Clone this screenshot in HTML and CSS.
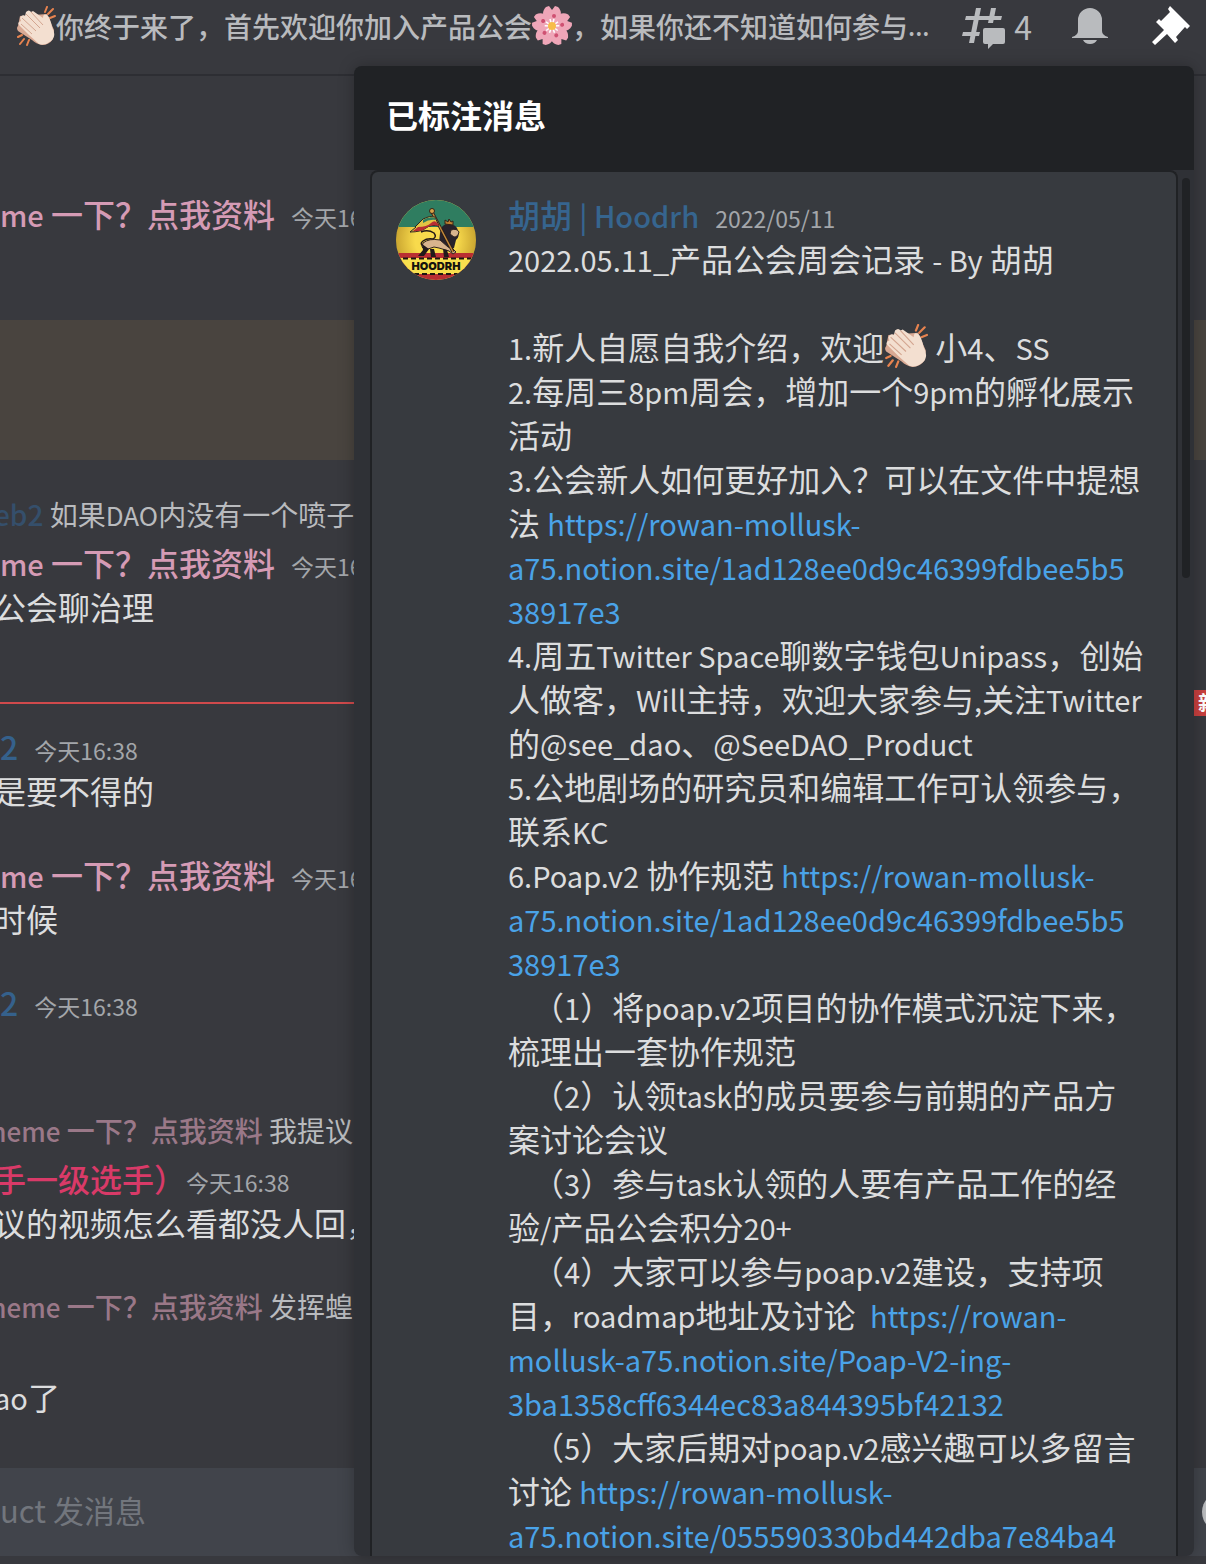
FILE: index.html
```html
<!DOCTYPE html>
<html lang="zh-CN">
<head>
<meta charset="utf-8">
<meta name="viewport" content="width=device-width, initial-scale=1">
<title>已标注消息</title>
<link rel="stylesheet" href="styles.css">
</head>
<body>
<svg class="defs" aria-hidden="true">
  <symbol id="clap" viewBox="0 0 38 40">
    <path d="M28 6l2-5M31 8l5-5M33 12l5-2M5 29l-4 2M7 33l-4 5M12 34l-2 5" stroke="#e8834f" stroke-width="2" fill="none" stroke-linecap="round"/>
    <path d="M1 20L3 10 30 8 37 24 36 33Q32 39 25 39 19 38 15 34L1 25q-2-3 0-5z" fill="#d9a994"/>
    <path d="M3 12q2-4 5-2l1-4q3-3 5 0l2-1 10 7q0-5 4-3 3 2 5 12 5 9-1 14-6 5-12 3L12 29 2 19q-2-3 2-4z" fill="#f3dfd0"/>
    <path d="M5 12l14 13M9 8l14 14M14 6l12 13M4 18l11 10" stroke="#d3a590" stroke-width="1" fill="none"/>
  </symbol>
</svg>

<div class="app">
  <header class="topbar">
    <div class="topic"><svg class="emoji" role="img" aria-label="鼓掌"><use href="#clap"/></svg>你终于来了，首先欢迎你加入产品公会<svg class="emoji" viewBox="-20 -20 40 40" role="img" aria-label="樱花"><g fill="#efa6b8"><path id="p" d="M0 0C-6-4-13-12-6-19L-3-20 0-16 3-20 6-19C13-12 6-4 0 0z"/><use href="#p" transform="rotate(72)"/><use href="#p" transform="rotate(144)"/><use href="#p" transform="rotate(216)"/><use href="#p" transform="rotate(288)"/></g><g stroke="#fff" stroke-width="1.500"><path id="s" d="M0 0L2-7M0 0L-2-7"/><use href="#s" transform="rotate(72)"/><use href="#s" transform="rotate(144)"/><use href="#s" transform="rotate(216)"/><use href="#s" transform="rotate(288)"/></g><g fill="#cf5172"><circle id="d" cx="2" cy="-10" r="2"/><use href="#d" transform="rotate(72)"/><use href="#d" transform="rotate(144)"/><use href="#d" transform="rotate(216)"/><use href="#d" transform="rotate(288)"/></g><circle r="4" fill="#f7bd4b"/></svg>，如果你还不知道如何参与<span class="en">...</span></div>
    <nav class="tools" aria-label="频道工具">
      <button class="tool threads" aria-label="子区"><svg width="44" height="44" viewBox="0 0 44 44"><path d="M14 4h5l-7 35H7zM29 4h5l-3 15h-5zM4 12h36l-1 4H3zM1 28h17l-1 4H0z"/><path d="M23 24h18q2 0 2 2v12q0 2-2 2H31l-5 5v-5h-3q-2 0-2-2V26q0-2 2-2z"/></svg>4</button>
      <button class="tool" aria-label="通知设置"><svg width="36" height="44" viewBox="0 0 36 44"><path d="M6 16a12 12 0 0 1 24 0v11q0 4 6 6v1H0v-1q6-2 6-6zM11 36h14q-2 4-7 4t-7-4z"/></svg></button>
      <button class="tool active" aria-label="已标注消息"><svg width="38" height="44" viewBox="0 0 38 44"><path d="M18 2l20 20-3 3-2-2-9 10 2 3-3 3-8-9L3 41l-3-3 12-12-8-8 3-3 2 2 9-9-2-3z"/></svg></button>
    </nav>
  </header>

  <main class="chat">
    <div class="msg first"><p><b class="pink"><span class="en">me</span> 一下？点我资料</b><time>今天16:38</time></p></div>
    <div class="mention"></div>
    <div class="msg reply-msg">
      <p class="reply cut"><b class="blue">eb2</b> 如果<span class="en">DAO</span>内没有一个喷子</p>
      <p><b class="pink"><span class="en">me</span> 一下？点我资料</b><time>今天16:38</time></p>
      <p class="cut">公会聊治理</p>
    </div>
    <div class="divider"><span class="new">新</span></div>
    <div class="msg after"><p><b class="blue">2</b><time>今天16:38</time></p><p class="cut">是要不得的</p></div>
    <div class="msg"><p><b class="pink"><span class="en">me</span> 一下？点我资料</b><time>今天16:38</time></p><p class="cut">时候</p></div>
    <div class="msg"><p><b class="blue">2</b><time>今天16:38</time></p></div>
    <div class="msg far">
      <p class="reply cut-wide"><b class="pink"><span class="en">meme</span> 一下？点我资料</b> 我提议</p>
      <p class="cut tight"><b class="red">手一级选手）</b><time>今天16:38</time></p>
      <p class="cut">议的视频怎么看都没人回，</p>
    </div>
    <div class="msg"><p class="reply cut-wide"><b class="pink"><span class="en">meme</span> 一下？点我资料</b> 发挥蝗</p></div>
    <div class="msg last"><p class="cut"><span class="en">ao</span>了</p></div>
  </main>

  <footer class="composer">
    <input type="text" aria-label="发消息" placeholder="uct 发消息">
    <button class="face" aria-label="表情"></button>
  </footer>

  <section class="pins" aria-labelledby="pins-title">
    <h1 id="pins-title">已标注消息</h1>
    <div class="pins-body">
      <article class="card">
        <svg class="avatar" viewBox="0 0 80 80" role="img" aria-label="Hoodrh">
          <defs><clipPath id="round"><circle cx="40" cy="40" r="40"/></clipPath>
          <radialGradient id="shade" gradientUnits="userSpaceOnUse" cx="40" cy="40" r="42"><stop offset=".5" stop-color="#7a4a00" stop-opacity="0"/><stop offset="1" stop-color="#7a4a00" stop-opacity=".4"/></radialGradient></defs>
          <g clip-path="url(#round)">
            <path fill="#f8da4c" d="M0 0h80v80H0z"/><path fill="#2f7d60" d="M0 0h80v27H0z"/>
            <path fill="url(#shade)" d="M0 27h80v26H0z"/><path fill="#b92e32" d="M0 53h80v27H0z"/>
            <path fill="#f8e04e" d="M0 58h80v16H0z"/>
            <path d="M7 58.500h68M18 74h48" stroke="#1c1713" stroke-width="2" stroke-dasharray="5 3"/>
            <path d="M28 47q-5-3-1-6t10-2q4-2 1-6-6-4-13-1" fill="none" stroke="#251a18" stroke-width="1.500"/>
            <path d="M44 33q1-9 8-9 9 0 10 7 2 6-2 9l-2 8-6 3-9-8z" fill="#28222b"/>
            <path d="M55 30q6-2 8 2-1 5-5 5l-4-3zM27 43q6-5 17-3l8 7 5 2 3 3-3 2-4-3-10-3-5-1-9 3-3-3z" fill="#d8b48e" stroke="#30231f"/>
            <path d="M26 44l1 6-5 6h6l5-7M34 49l1 8h5l-2-8M47 49l1 8h5l-2-7" fill="#211a1b"/>
            <path d="M36 12l21 40" stroke="#2b1d16" stroke-width="3"/><path d="M36 12l21 40" stroke="#c58a3c" stroke-width="1.500"/>
            <path d="M27 19q7-4 12-2l4 9q-8-2-13 2t-16 4l6-5h-1z" fill="#e2c443" stroke="#2a2421"/><path d="M27 20q6-4 12-2l1 2q-7-1-13 3z" fill="#2f7d60"/><path d="M22 27q9 0 13-4t7 1l1 2q-8-2-13 2t-13 3z" fill="#b92e32"/>
            <circle cx="36" cy="11" r="2.500" fill="#d8a248" stroke="#332216"/><path d="M49 24v-4l3 2 1-3 2 3 2-1v4z" fill="#be8032" stroke="#332216"/>
            <text x="40" y="70" text-anchor="middle" class="avatar-text">HOODRH</text>
          </g>
        </svg>
        <div class="content">
          <h2><span class="author">胡胡 <span class="en">| Hoodrh</span></span><time>2022/05/11</time></h2>
          <p><span class="en">2022.05.11_</span>产品公会周会记录 <span class="en">- By</span> 胡胡</p>
          <p class="blank"></p>
          <p><span class="en">1.</span>新人自愿自我介绍，欢迎<svg class="emoji" role="img" aria-label="鼓掌"><use href="#clap"/></svg> 小<span class="en">4</span>、<span class="en">SS</span></p>
          <p><span class="en">2.</span>每周三<span class="en">8pm</span>周会，增加一个<span class="en">9pm</span>的孵化展示<br>活动</p>
          <p><span class="en">3.</span>公会新人如何更好加入？可以在文件中提想<br>法 <a href="#notion-ideas">https://rowan-mollusk-<br>a75.notion.site/1ad128ee0d9c46399fdbee5b5<br>38917e3</a></p>
          <p><span class="en">4.</span>周五<span class="en">Twitter Space</span>聊数字钱包<span class="en">Unipass</span>，创始<br>人做客，<span class="en">Will</span>主持，欢迎大家参与<span class="en">,</span>关注<span class="en">Twitter</span><br>的<span class="en">@see_dao</span>、<span class="en">@SeeDAO_Product</span></p>
          <p><span class="en">5.</span>公地剧场的研究员和编辑工作可认领参与，<br>联系<span class="en">KC</span></p>
          <p><span class="en">6.Poap.v2</span> 协作规范 <a href="#notion-poap">https://rowan-mollusk-<br>a75.notion.site/1ad128ee0d9c46399fdbee5b5<br>38917e3</a></p>
          <p class="sub">（<span class="en">1</span>）将<span class="en">poap.v2</span>项目的协作模式沉淀下来，<br>梳理出一套协作规范</p>
          <p class="sub">（<span class="en">2</span>）认领<span class="en">task</span>的成员要参与前期的产品方<br>案讨论会议</p>
          <p class="sub">（<span class="en">3</span>）参与<span class="en">task</span>认领的人要有产品工作的经<br>验<span class="en">/</span>产品公会积分<span class="en">20+</span></p>
          <p class="sub">（<span class="en">4</span>）大家可以参与<span class="en">poap.v2</span>建设，支持项<br>目，<span class="en">roadmap</span>地址及讨论&nbsp; <a href="#notion-roadmap">https://rowan-<br>mollusk-a75.notion.site/Poap-V2-ing-<br>3ba1358cff6344ec83a844395bf42132</a></p>
          <p class="sub">（<span class="en">5</span>）大家后期对<span class="en">poap.v2</span>感兴趣可以多留言<br>讨论 <a href="#notion-talk">https://rowan-mollusk-<br>a75.notion.site/055590330bd442dba7e84ba4</a></p>
        </div>
      </article>
      <div class="scroll"></div>
    </div>
  </section>
</div>
</body>
</html>
```
FILE: styles.css
```css
* { box-sizing: border-box; }
body { margin: 0; background: #38393e; color: #dcddde; font: 400 32px/44px "Noto Sans CJK SC", sans-serif; }
p, h1, h2 { margin: 0; }
button { border: 0; padding: 0; background: none; color: inherit; font: inherit; }
.defs { position: absolute; width: 0; height: 0; }
.app { position: relative; display: flex; flex-direction: column; min-height: 100vh; padding-bottom: 8px; overflow: hidden; }
.en { font-size: 29px; line-height: 1; }

.topbar { display: flex; align-items: center; justify-content: space-between; height: 76px; padding: 0 16px 22px; border-bottom: 2px solid #2d2e33; color: #b9bbbe; }
.topic { display: flex; align-items: center; font-size: 28px; font-weight: 500; white-space: nowrap; }
.topic .en { font-size: 24px; }
.emoji { flex: none; width: 40px; height: 40px; }
.tools { display: flex; align-items: center; gap: 40px; }
.tool { display: flex; align-items: center; height: 44px; }
.tool svg { fill: currentColor; overflow: visible; }
.threads { gap: 8px; }
.active { margin-left: 4px; color: #fff; }

.chat { flex: 1; white-space: nowrap; }
.msg { margin-top: 40px; }
.first { margin-top: 115px; }
.reply-msg { margin-top: 32px; }
.after { margin-top: 20px; }
.far { margin-top: 84px; }
.last { margin-top: 46px; }
.chat p { height: 44px; }
.chat b { font-weight: 500; }
.chat time { margin-left: 16px; font-size: 23px; line-height: 1; color: #a3a6aa; }
.chat .reply { margin-bottom: 4px; font-size: 28px; color: #b9bbbe; }
.reply .en { font-size: 26px; }
.chat .cut { margin-left: -6px; }
.chat .cut-wide { margin-left: -18px; }
.chat .tight time { margin-left: 0; }
.pink { color: #d59bb5; }
.blue { color: #35618c; }
.red { color: #d93a68; }
.reply .pink { color: #9a7888; }
.reply .blue { color: #354f6b; }
.mention { height: 140px; margin-top: 85px; background: #49443f; }
.divider { position: relative; height: 2px; margin-top: 74px; background: #d04a4c; }
.new { position: absolute; right: -24px; top: -12px; width: 36px; padding-left: 4px; background: #c9403f; color: #fff; font-size: 20px; font-weight: 700; line-height: 26px; }

.composer { display: flex; align-items: center; height: 88px; background: #41444b; }
.composer input { flex: 1; min-width: 0; padding: 0 0 4px; border: 0; background: none; color: #dcddde; font: inherit; font-size: 31px; outline: 0; }
.composer input::placeholder { color: #72767d; opacity: 1; }
.face { flex: none; width: 40px; height: 40px; margin-right: -36px; border-radius: 50%; background: #b9bbbe; }

.pins { position: absolute; top: 66px; right: 12px; bottom: 8px; left: 354px; display: flex; flex-direction: column; border-radius: 8px; background: #2f3136; box-shadow: 0 0 16px rgba(0, 0, 0, .25); overflow: hidden; }
.pins h1 { flex: none; padding: 24px 32px 32px; background: #202225; color: #fff; font-size: 32px; font-weight: 700; line-height: 48px; }
.pins-body { display: flex; flex: 1; gap: 4px; min-height: 0; padding: 0 4px 0 16px; }
.card { display: flex; flex: 1; gap: 32px; align-items: flex-start; min-width: 0; padding: 20px 24px 0; border: 2px solid #202225; border-bottom: 0; border-radius: 8px 8px 0 0; background: #373a3f; overflow: hidden; }
.avatar { flex: none; width: 80px; height: 80px; margin-top: 8px; }
.avatar-text { font: 900 11px Inter, sans-serif; fill: #15130f; }
.content { white-space: nowrap; }
.content h2 { height: 44px; font-size: 32px; font-weight: 500; }
.author { color: #36658f; }
.content time { margin-left: 16px; color: #a3a6aa; font-size: 23px; font-weight: 400; line-height: 1; }
.content p { min-height: 44px; }
.content .emoji { width: 44px; height: 44px; vertical-align: top; }
.sub { text-indent: 24px; }
.content a { color: #4aa3e8; font-size: 29px; line-height: 1; text-decoration: none; }
.scroll { width: 8px; height: 400px; margin-top: 8px; border-radius: 4px; background: #202225; }
```
